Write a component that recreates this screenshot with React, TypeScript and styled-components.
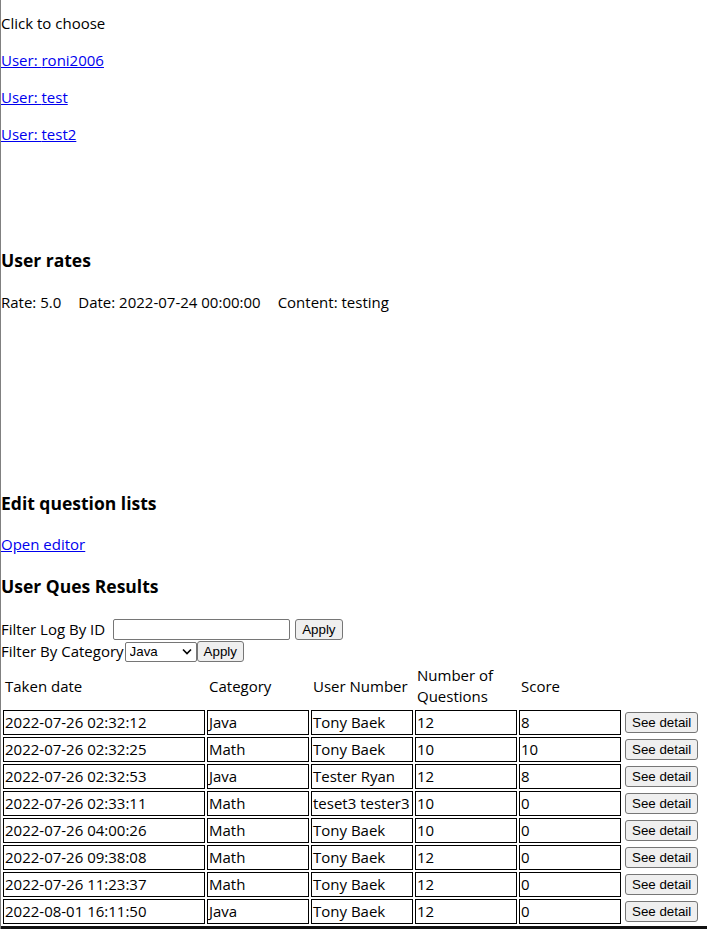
import React from 'react';
import styled, { createGlobalStyle } from 'styled-components';

const GlobalStyle = createGlobalStyle`
  html, body {
    margin: 0;
    padding: 0;
    background: #fff;
  }
  body {
    font-family: "Open Sans", "Noto Sans", sans-serif;
    font-size: 15px;
    color: #000;
  }
`;

const Page = styled.div`
  min-height: 100vh;
  box-sizing: border-box;
  border-left: 1px solid #808080;
  line-height: 21px;
`;

const Box = styled.section<{ $height?: number }>`
  display: flow-root;
  height: ${({ $height }) => ($height ? `${$height}px` : 'auto')};
`;

const Line = styled.p<{ $top?: number }>`
  margin: ${({ $top = 16 }) => $top}px 0 0;
  line-height: 21px;
`;

const Link = styled.a`
  color: #0000ee;
  text-decoration: underline;
  cursor: pointer;
`;

const Heading = styled.h3<{ $top?: number }>`
  margin: ${({ $top = 20 }) => $top}px 0 0;
  font-size: 17.5px;
  line-height: 25px;
  font-weight: 700;
`;

const RateItem = styled.span`
  margin-right: 17px;
`;

const Filters = styled.div`
  margin-top: 19px;
`;

const FilterRow = styled.div<{ $h?: number }>`
  height: ${({ $h = 23 }) => $h}px;
  display: flex;
  align-items: center;
  white-space: nowrap;
`;

const TextField = styled.input`
  box-sizing: border-box;
  width: 177px;
  height: 21px;
  margin-left: 8px;
  padding: 1px 2px;
  border: 1px solid #767676;
  border-radius: 2px;
  font: 13.33px Arial, "Liberation Sans", sans-serif;
`;

const SelectWrap = styled.span`
  position: relative;
  display: inline-flex;
  margin-left: 1px;
`;

const Select = styled.select`
  appearance: none;
  box-sizing: border-box;
  width: 72px;
  height: 20px;
  padding: 0 18px 0 4px;
  border: 1px solid #767676;
  border-radius: 2px;
  background: #fff;
  color: #000;
  font: 13.33px Arial, "Liberation Sans", sans-serif;
`;

const Chevron = styled.svg`
  position: absolute;
  right: 5px;
  top: 6px;
  pointer-events: none;
`;

const Button = styled.button<{ $gap?: number }>`
  box-sizing: border-box;
  height: 21px;
  margin-left: ${({ $gap = 0 }) => $gap}px;
  padding: 1px 6px;
  border: 1px solid #767676;
  border-radius: 3px;
  background: #efefef;
  color: #000;
  font: 13.33px Arial, "Liberation Sans", sans-serif;
`;

const Results = styled.table`
  border-collapse: separate;
  border-spacing: 2px;
  table-layout: fixed;
  width: 702px;
`;

const HeadCell = styled.td<{ $w: number }>`
  box-sizing: border-box;
  width: ${({ $w }) => $w}px;
  padding: 0 1px 1px 2px;
  line-height: 21px;
  vertical-align: middle;
`;

const Cell = styled.td`
  box-sizing: border-box;
  padding: 1px;
  border: 1px solid #000;
  line-height: 21px;
  white-space: nowrap;
  overflow: hidden;
`;

const ActionCell = styled.td`
  padding: 0 1px 1px 2px;
  white-space: nowrap;
`;

const Footer = styled.div`
  height: 20px;
  background: #111;
`;

const users = ['roni2006', 'test', 'test2'];

const results = [
  ['2022-07-26 02:32:12', 'Java', 'Tony Baek', '12', '8'],
  ['2022-07-26 02:32:25', 'Math', 'Tony Baek', '10', '10'],
  ['2022-07-26 02:32:53', 'Java', 'Tester Ryan', '12', '8'],
  ['2022-07-26 02:33:11', 'Math', 'teset3 tester3', '10', '0'],
  ['2022-07-26 04:00:26', 'Math', 'Tony Baek', '10', '0'],
  ['2022-07-26 09:38:08', 'Math', 'Tony Baek', '12', '0'],
  ['2022-07-26 11:23:37', 'Math', 'Tony Baek', '12', '0'],
  ['2022-08-01 16:11:50', 'Java', 'Tony Baek', '12', '0'],
];

export default function App() {
  return (
    <Page>
      <GlobalStyle />
      <Box $height={228}>
        <Line $top={13}>Click to choose</Line>
        {users.map((u) => (
          <Line key={u}>
            <Link>User: {u}</Link>
          </Line>
        ))}
      </Box>

      <Box $height={243}>
        <Heading>User rates</Heading>
        <Line $top={19}>
          <RateItem>Rate: 5.0</RateItem>
          <RateItem>Date: 2022-07-24 00:00:00</RateItem>
          <RateItem>Content: testing</RateItem>
        </Line>
      </Box>

      <Box>
        <Heading>Edit question lists</Heading>
        <Line $top={18}>
          <Link>Open editor</Link>
        </Line>
      </Box>

      <Box>
        <Heading $top={19}>User Ques Results</Heading>
        <Filters>
          <FilterRow $h={22}>
            Filter Log By ID
            <TextField type="text" />
            <Button $gap={5}>Apply</Button>
          </FilterRow>
          <FilterRow>
            Filter By Category
            <SelectWrap>
              <Select defaultValue="Java">
                <option>Java</option>
                <option>Math</option>
              </Select>
              <Chevron width="10" height="7" viewBox="0 0 10 7">
                <path d="M1 1.5 L5 5.5 L9 1.5" fill="none" stroke="#000" strokeWidth="1.6" />
              </Chevron>
            </SelectWrap>
            <Button>Apply</Button>
          </FilterRow>
        </Filters>
        <Results>
          <tbody>
            <tr>
              <HeadCell $w={202}>Taken date</HeadCell>
              <HeadCell $w={102}>Category</HeadCell>
              <HeadCell $w={102}>User Number</HeadCell>
              <HeadCell $w={102}>Number of Questions</HeadCell>
              <HeadCell $w={102}>Score</HeadCell>
              <HeadCell $w={78}></HeadCell>
            </tr>
            {results.map((r) => (
              <tr key={r[0]}>
                {r.map((v, i) => (
                  <Cell key={i}>{v}</Cell>
                ))}
                <ActionCell>
                  <Button>See detail</Button>
                </ActionCell>
              </tr>
            ))}
          </tbody>
        </Results>
      </Box>
      <Footer />
    </Page>
  );
}
